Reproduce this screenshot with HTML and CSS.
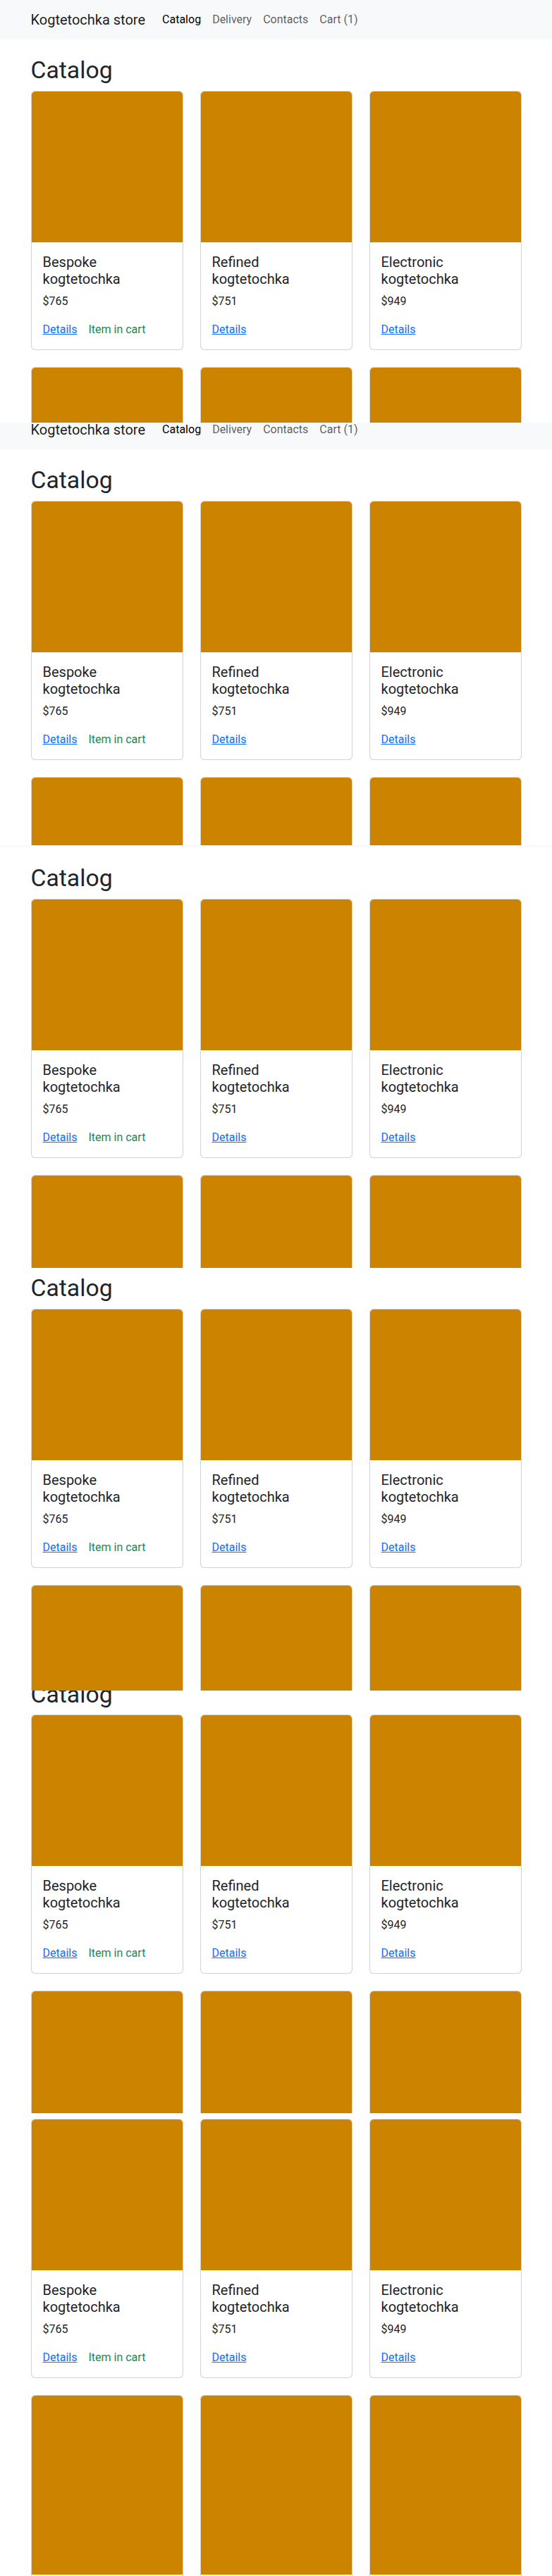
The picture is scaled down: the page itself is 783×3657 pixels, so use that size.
FILE: index.html
```html
<!DOCTYPE html>
<html lang="en">
<head>
<meta charset="utf-8">
<title>Catalog — Kogtetochka store</title>
<link rel="stylesheet" href="styles.css">
</head>
<body>

<section class="shot shot-1">
  <div class="page">
    <nav class="navbar"><div class="nav-container">
      <a class="brand" href="#">Kogtetochka store</a>
      <ul class="nav">
        <li><a class="nav-link active" href="#">Catalog</a></li>
        <li><a class="nav-link" href="#">Delivery</a></li>
        <li><a class="nav-link" href="#">Contacts</a></li>
        <li><a class="nav-link" href="#">Cart (1)</a></li>
      </ul>
    </div></nav>
    <main class="main">
      <h1 class="title">Catalog</h1>
      <div class="grid">
        <div class="card"><div class="card-img"></div><div class="card-body"><h5 class="card-title">Bespoke kogtetochka</h5><p class="price">$765</p><div class="actions"><a class="link" href="#">Details</a><span class="in-cart">Item in cart</span></div></div></div>
        <div class="card"><div class="card-img"></div><div class="card-body"><h5 class="card-title">Refined kogtetochka</h5><p class="price">$751</p><div class="actions"><a class="link" href="#">Details</a></div></div></div>
        <div class="card"><div class="card-img"></div><div class="card-body"><h5 class="card-title">Electronic kogtetochka</h5><p class="price">$949</p><div class="actions"><a class="link" href="#">Details</a></div></div></div>
        <div class="card"><div class="card-img tall"></div><div class="card-body empty"></div></div>
        <div class="card"><div class="card-img tall"></div><div class="card-body empty"></div></div>
        <div class="card"><div class="card-img tall"></div><div class="card-body empty"></div></div>
      </div>
    </main>
  </div>
</section>

<section class="shot shot-2">
  <div class="page">
    <nav class="navbar"><div class="nav-container">
      <a class="brand" href="#">Kogtetochka store</a>
      <ul class="nav">
        <li><a class="nav-link active" href="#">Catalog</a></li>
        <li><a class="nav-link" href="#">Delivery</a></li>
        <li><a class="nav-link" href="#">Contacts</a></li>
        <li><a class="nav-link" href="#">Cart (1)</a></li>
      </ul>
    </div></nav>
    <main class="main">
      <h1 class="title">Catalog</h1>
      <div class="grid">
        <div class="card"><div class="card-img"></div><div class="card-body"><h5 class="card-title">Bespoke kogtetochka</h5><p class="price">$765</p><div class="actions"><a class="link" href="#">Details</a><span class="in-cart">Item in cart</span></div></div></div>
        <div class="card"><div class="card-img"></div><div class="card-body"><h5 class="card-title">Refined kogtetochka</h5><p class="price">$751</p><div class="actions"><a class="link" href="#">Details</a></div></div></div>
        <div class="card"><div class="card-img"></div><div class="card-body"><h5 class="card-title">Electronic kogtetochka</h5><p class="price">$949</p><div class="actions"><a class="link" href="#">Details</a></div></div></div>
        <div class="card"><div class="card-img tall"></div><div class="card-body empty"></div></div>
        <div class="card"><div class="card-img tall"></div><div class="card-body empty"></div></div>
        <div class="card"><div class="card-img tall"></div><div class="card-body empty"></div></div>
      </div>
    </main>
  </div>
</section>

<section class="shot shot-3">
  <div class="page">
    <nav class="navbar"><div class="nav-container">
      <a class="brand" href="#">Kogtetochka store</a>
      <ul class="nav">
        <li><a class="nav-link active" href="#">Catalog</a></li>
        <li><a class="nav-link" href="#">Delivery</a></li>
        <li><a class="nav-link" href="#">Contacts</a></li>
        <li><a class="nav-link" href="#">Cart (1)</a></li>
      </ul>
    </div></nav>
    <main class="main">
      <h1 class="title">Catalog</h1>
      <div class="grid">
        <div class="card"><div class="card-img"></div><div class="card-body"><h5 class="card-title">Bespoke kogtetochka</h5><p class="price">$765</p><div class="actions"><a class="link" href="#">Details</a><span class="in-cart">Item in cart</span></div></div></div>
        <div class="card"><div class="card-img"></div><div class="card-body"><h5 class="card-title">Refined kogtetochka</h5><p class="price">$751</p><div class="actions"><a class="link" href="#">Details</a></div></div></div>
        <div class="card"><div class="card-img"></div><div class="card-body"><h5 class="card-title">Electronic kogtetochka</h5><p class="price">$949</p><div class="actions"><a class="link" href="#">Details</a></div></div></div>
        <div class="card"><div class="card-img tall"></div><div class="card-body empty"></div></div>
        <div class="card"><div class="card-img tall"></div><div class="card-body empty"></div></div>
        <div class="card"><div class="card-img tall"></div><div class="card-body empty"></div></div>
      </div>
    </main>
  </div>
</section>

<section class="shot shot-4">
  <div class="page">
    <nav class="navbar"><div class="nav-container">
      <a class="brand" href="#">Kogtetochka store</a>
      <ul class="nav">
        <li><a class="nav-link active" href="#">Catalog</a></li>
        <li><a class="nav-link" href="#">Delivery</a></li>
        <li><a class="nav-link" href="#">Contacts</a></li>
        <li><a class="nav-link" href="#">Cart (1)</a></li>
      </ul>
    </div></nav>
    <main class="main">
      <h1 class="title">Catalog</h1>
      <div class="grid">
        <div class="card"><div class="card-img"></div><div class="card-body"><h5 class="card-title">Bespoke kogtetochka</h5><p class="price">$765</p><div class="actions"><a class="link" href="#">Details</a><span class="in-cart">Item in cart</span></div></div></div>
        <div class="card"><div class="card-img"></div><div class="card-body"><h5 class="card-title">Refined kogtetochka</h5><p class="price">$751</p><div class="actions"><a class="link" href="#">Details</a></div></div></div>
        <div class="card"><div class="card-img"></div><div class="card-body"><h5 class="card-title">Electronic kogtetochka</h5><p class="price">$949</p><div class="actions"><a class="link" href="#">Details</a></div></div></div>
        <div class="card"><div class="card-img tall"></div><div class="card-body empty"></div></div>
        <div class="card"><div class="card-img tall"></div><div class="card-body empty"></div></div>
        <div class="card"><div class="card-img tall"></div><div class="card-body empty"></div></div>
      </div>
    </main>
  </div>
</section>

<section class="shot shot-5">
  <div class="page">
    <nav class="navbar"><div class="nav-container">
      <a class="brand" href="#">Kogtetochka store</a>
      <ul class="nav">
        <li><a class="nav-link active" href="#">Catalog</a></li>
        <li><a class="nav-link" href="#">Delivery</a></li>
        <li><a class="nav-link" href="#">Contacts</a></li>
        <li><a class="nav-link" href="#">Cart (1)</a></li>
      </ul>
    </div></nav>
    <main class="main">
      <h1 class="title">Catalog</h1>
      <div class="grid">
        <div class="card"><div class="card-img"></div><div class="card-body"><h5 class="card-title">Bespoke kogtetochka</h5><p class="price">$765</p><div class="actions"><a class="link" href="#">Details</a><span class="in-cart">Item in cart</span></div></div></div>
        <div class="card"><div class="card-img"></div><div class="card-body"><h5 class="card-title">Refined kogtetochka</h5><p class="price">$751</p><div class="actions"><a class="link" href="#">Details</a></div></div></div>
        <div class="card"><div class="card-img"></div><div class="card-body"><h5 class="card-title">Electronic kogtetochka</h5><p class="price">$949</p><div class="actions"><a class="link" href="#">Details</a></div></div></div>
        <div class="card"><div class="card-img tall"></div><div class="card-body empty"></div></div>
        <div class="card"><div class="card-img tall"></div><div class="card-body empty"></div></div>
        <div class="card"><div class="card-img tall"></div><div class="card-body empty"></div></div>
      </div>
    </main>
  </div>
</section>

<section class="shot shot-6">
  <div class="page">
    <nav class="navbar"><div class="nav-container">
      <a class="brand" href="#">Kogtetochka store</a>
      <ul class="nav">
        <li><a class="nav-link active" href="#">Catalog</a></li>
        <li><a class="nav-link" href="#">Delivery</a></li>
        <li><a class="nav-link" href="#">Contacts</a></li>
        <li><a class="nav-link" href="#">Cart (1)</a></li>
      </ul>
    </div></nav>
    <main class="main">
      <h1 class="title">Catalog</h1>
      <div class="grid">
        <div class="card"><div class="card-img"></div><div class="card-body"><h5 class="card-title">Bespoke kogtetochka</h5><p class="price">$765</p><div class="actions"><a class="link" href="#">Details</a><span class="in-cart">Item in cart</span></div></div></div>
        <div class="card"><div class="card-img"></div><div class="card-body"><h5 class="card-title">Refined kogtetochka</h5><p class="price">$751</p><div class="actions"><a class="link" href="#">Details</a></div></div></div>
        <div class="card"><div class="card-img"></div><div class="card-body"><h5 class="card-title">Electronic kogtetochka</h5><p class="price">$949</p><div class="actions"><a class="link" href="#">Details</a></div></div></div>
        <div class="card"><div class="card-img tall"></div><div class="card-body empty"></div></div>
        <div class="card"><div class="card-img tall"></div><div class="card-body empty"></div></div>
        <div class="card"><div class="card-img tall"></div><div class="card-body empty"></div></div>
      </div>
    </main>
  </div>
</section>

</body>
</html>
```

FILE: styles.css
```css
* { box-sizing: border-box; }

html, body { margin: 0; padding: 0; }

body {
  font-family: Roboto, "Liberation Sans", sans-serif;
  font-size: 16px;
  line-height: 1.5;
  color: #212529;
  background: #fff;
}

/* each section is one scrolled capture of the same page */
.shot { height: 600px; overflow: hidden; }
.shot-6 { height: 657px; }
.shot-2 .page { margin-top: -18px; }
.shot-3 .page { margin-top: -53px; }
.shot-4 .page { margin-top: -71px; }
.shot-5 .page { margin-top: -94.5px; }
.shot-6 .page { margin-top: -120.5px; }

.navbar { background: #f8f9fa; padding: 8px 0; }
.nav-container {
  max-width: 720px;
  margin: 0 auto;
  padding: 0 12px;
  display: flex;
  align-items: center;
}
.brand {
  font-size: 20px;
  line-height: 30px;
  padding: 5px 0;
  margin-right: 16px;
  color: rgba(0, 0, 0, 0.9);
  text-decoration: none;
}
.nav { display: flex; list-style: none; margin: 0; padding: 0; }
.nav-link {
  display: block;
  padding: 8px;
  color: rgba(0, 0, 0, 0.65);
  text-decoration: none;
}
.nav-link.active { color: #000; }

.main { max-width: 720px; margin: 24px auto 0; padding: 0 12px; }
.title {
  font-size: calc(1.375rem + 1.5vw);
  font-weight: 400;
  line-height: 1.2;
  margin: 0 0 8px;
}

.grid { display: grid; grid-template-columns: repeat(3, 1fr); gap: 24px; }

.card {
  border: 1px solid rgba(0, 0, 0, 0.175);
  border-radius: 6px;
  overflow: hidden;
  background: #fff;
}
.card-img { height: 214px; background: #cc8400; }
.card-img.tall { height: 254px; }
.card-body { padding: 16px; }
.card-body.empty { height: 120px; }
.card-title {
  font-size: 20px;
  font-weight: 400;
  line-height: 1.2;
  margin: 0 0 8px;
  width: min-content;
}
.price { margin: 0 0 16px; }
.actions { display: flex; gap: 16px; }
.link { color: #0d6efd; text-decoration: underline; }
.in-cart { color: #198754; }
```
